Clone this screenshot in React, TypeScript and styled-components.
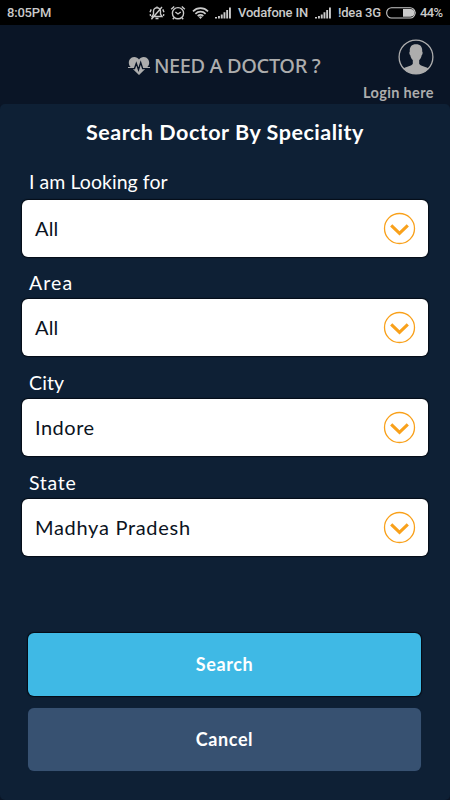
import React from "react";
import styled, { createGlobalStyle } from "styled-components";

const GlobalStyle = createGlobalStyle`
  * { box-sizing: border-box; }
  html, body { margin: 0; padding: 0; background: #0a1627; }
  button { font: inherit; border: 0; padding: 0; cursor: pointer; background: none; }
`;

const Screen = styled.main`
  width: 450px;
  height: 800px;
  overflow: hidden;
  display: flex;
  flex-direction: column;
  background: #0a1526;
  font-family: Lato, sans-serif;
  color: #fff;
`;

const StatusBar = styled.div`
  height: 25px;
  flex: none;
  display: flex;
  align-items: center;
  padding: 1px 8px 0 7px;
  background: #000;
  color: #cacaca;
  font: 500 13px/24px Roboto, sans-serif;
  white-space: nowrap;
`;

const StatusItem = styled.span<{ $width: number; $spacing?: number }>`
  width: ${(p) => p.$width}px;
  flex: none;
  letter-spacing: ${(p) => p.$spacing ?? 0}px;
  display: flex;
  align-items: center;
`;

const Header = styled.header`
  height: 79px;
  flex: none;
  display: grid;
  grid-template-columns: 128px 1fr 100px;
  color: #adadad;
`;

const Brand = styled.h1`
  grid-column: 2;
  margin: 0;
  height: 82px;
  display: flex;
  align-items: center;
  gap: 4px;
  white-space: nowrap;
  font: 500 20px/28px "Noto Sans", sans-serif;
`;

const BrandName = styled.span<{ $spacing: number }>`
  letter-spacing: ${(p) => p.$spacing}px;
`;

const Login = styled.button`
  && {
    width: 100px;
    padding: 14px 0 0 13px;
    display: flex;
    flex-direction: column;
    align-items: flex-start;
    gap: 8px;
    color: #adadad;
    font: 700 14.5px/20px Lato, sans-serif;
    letter-spacing: 0.35px;
    white-space: nowrap;
  }
  svg { margin-left: 35px; display: block; }
`;

const Panel = styled.section`
  flex: 1;
  border-radius: 5px;
  background: #0e2035;
  display: flex;
  flex-direction: column;
`;

const PanelTitle = styled.h2<{ $spacing: number }>`
  margin: 14px 0 0;
  height: 28px;
  text-align: center;
  font-size: 21.5px;
  font-weight: 700;
  line-height: 28px;
  letter-spacing: ${(p) => p.$spacing}px;
`;

const Fields = styled.div`
  margin: 24px 22px 0;
  display: flex;
  flex-direction: column;
`;

const Field = styled.div<{ $height: number; $labelTop: number }>`
  height: ${(p) => p.$height}px;
  padding-top: ${(p) => p.$labelTop}px;
  display: flex;
  flex-direction: column;
  justify-content: space-between;
`;

const Label = styled.label<{ $spacing: number }>`
  padding-left: 7px;
  font-size: 19.5px;
  line-height: 24px;
  letter-spacing: ${(p) => p.$spacing}px;
`;

const Select = styled.button<{ $spacing: number }>`
  && {
    width: 406px;
    height: 57px;
    flex: none;
    display: flex;
    align-items: center;
    justify-content: space-between;
    padding: 0 12px 0 13px;
    border-radius: 6px;
    background: #fff;
    color: #0b1322;
    box-shadow: 0 0 1px 0.5px #050d18;
    font: 400 20px/26px Lato, sans-serif;
    letter-spacing: ${(p) => p.$spacing}px;
  }
`;

const Value = styled.span`
  padding-bottom: 2px;
`;

const Actions = styled.div`
  margin: 77px 29px 0 28px;
  display: flex;
  flex-direction: column;
  gap: 12px;
`;

const Action = styled.button<{ $primary?: boolean; $spacing: number }>`
  && {
    height: 63px;
    padding-bottom: 2px;
    border-radius: 6px;
    background: ${(p) => (p.$primary ? "#3fb9e5" : "#375171")};
    box-shadow: ${(p) => (p.$primary ? "0 0 1px 0.5px #040b14" : "0 0 1px #1d3350")};
    color: #fff;
    font: 700 18px/24px Lato, sans-serif;
    letter-spacing: ${(p) => p.$spacing}px;
  }
`;

const MutedBell = () => (
  <svg width="16" height="16" viewBox="0 0 16 16" fill="none" stroke="currentColor" strokeWidth="1.4">
    <path d="M3 11.5h10L11.5 9V6.2A3.5 3.5 0 0 0 4.5 6.2V9zM6.5 13.5h3M8 2.7V1.4M2.2 4.4 1 7.2M13.8 4.4 15 7.2M1.2 9.2 1.6 11M14.8 9.2 14.4 11M2.4 14.2 13 2" />
  </svg>
);

const AlarmClock = () => (
  <svg width="16" height="16" viewBox="0 0 16 16" fill="none" stroke="currentColor" strokeWidth="1.4">
    <circle cx="8" cy="8.2" r="5.6" />
    <path d="m5.4 7 2.6 2 2.8-2M1.2 4.2l3-2.8M14.8 4.2l-3-2.8M4 12.8l-1.2 1.4M12 12.8l1.2 1.4" />
  </svg>
);

const Wifi = () => (
  <svg width="17" height="14" viewBox="0 0 17 14" fill="none" stroke="currentColor" strokeWidth="1.7">
    <path d="M1 5.3a10.6 10.6 0 0 1 15 0M3.4 7.8a7.3 7.3 0 0 1 10.2 0M5.7 10.1a4 4 0 0 1 5.6 0" />
    <path d="m8.5 13 1.8-1.9a2.6 2.6 0 0 0-3.6 0z" fill="currentColor" stroke="none" />
  </svg>
);

const Signal = () => (
  <svg width="16" height="12" viewBox="0 0 16 12" fill="currentColor">
    <path d="M0 10h2v1.5H0zM3 9h1.9v2.5H3zM5.8 7.4h1.9v4.1H5.8zM8.5 5.3h1.9v6.2H8.5zM11.2 3h1.9v8.5h-1.9zM14 .5h1.9v11H14z" />
  </svg>
);

const Battery = () => (
  <svg width="31" height="12" viewBox="0 0 31 12">
    <rect x=".7" y=".7" width="28.3" height="10.3" rx="4.8" fill="none" stroke="currentColor" strokeWidth="1.1" />
    <path d="M17 2h7.5a3.8 3.8 0 0 1 0 7.7H17zM29.4 4.2q1.2 1.6 0 3.3z" fill="currentColor" />
  </svg>
);

const HeartPulse = () => (
  <svg width="22" height="20" viewBox="0 0 22 20">
    <path d="M11 19 2.2 10.5C-.5 7.5.7 1.3 6.2 1c2.1 0 3.8 1 4.8 2.4C12 2 13.7 1 15.8 1c5.5.3 6.7 6.5 4 9.5z" fill="currentColor" />
    <path d="M2.5 12.6h4l1.8-5.3 2.2 6.4L12.7 6.5l2 6.1h4.8" fill="none" stroke="#0a1526" strokeWidth="1.4" />
    <path d="M0 11.5h5.8M15.5 11.5H22" fill="none" stroke="currentColor" strokeWidth="1" />
  </svg>
);

const Avatar = () => (
  <svg width="36" height="36" viewBox="0 0 36 36">
    <circle cx="18" cy="18" r="16.9" fill="none" stroke="currentColor" strokeWidth="1.3" />
    <path d="M18 5.2c-4.3 0-6.6 2.5-6.2 7.3-.8.5-.5 3 .5 3.8.4 2.1 1.2 3.7 2.5 4.8v3.7c-1 2.2-6.5 3-9.3 4.7A16.9 16.9 0 0 0 18 35a16.9 16.9 0 0 0 12.5-5.5c-2.8-1.7-8.3-2.5-9.3-4.7v-3.7c1.3-1.1 2.1-2.7 2.5-4.8 1-.8 1.3-3.3.5-3.8.4-4.8-1.9-7.3-6.2-7.3z" fill="currentColor" />
  </svg>
);

const ChevronCircle = () => (
  <svg width="33" height="33" viewBox="0 0 33 33" fill="none" stroke="#f9a11b">
    <circle cx="16.5" cy="16.5" r="15" strokeWidth="1.3" />
    <path d="m8.2 13.3 8.3 8 8.3-8" strokeWidth="3.1" />
  </svg>
);

const fields = [
  { id: "speciality", label: "I am Looking for", value: "All", height: 87, labelTop: 0, spacing: 0.05, valueSpacing: 0.2 },
  { id: "area", label: "Area", value: "All", height: 99, labelTop: 14, spacing: 1.1, valueSpacing: 0.2 },
  { id: "city", label: "City", value: "Indore", height: 100, labelTop: 15, spacing: 0.1, valueSpacing: 0.5 },
  { id: "state", label: "State", value: "Madhya Pradesh", height: 100, labelTop: 15, spacing: 0.7, valueSpacing: 0.7 },
];

export default function App() {
  return (
    <>
      <GlobalStyle />
      <Screen>
        <StatusBar>
          <StatusItem $width={142} $spacing={-0.2}>8:05PM</StatusItem>
          <StatusItem $width={21}><MutedBell /></StatusItem>
          <StatusItem $width={22}><AlarmClock /></StatusItem>
          <StatusItem $width={23}><Wifi /></StatusItem>
          <StatusItem $width={23}><Signal /></StatusItem>
          <StatusItem $width={77} $spacing={-0.2}>Vodafone IN</StatusItem>
          <StatusItem $width={23}><Signal /></StatusItem>
          <StatusItem $width={48} $spacing={-0.2}>!dea 3G</StatusItem>
          <StatusItem $width={34}><Battery /></StatusItem>
          <StatusItem $width={26} $spacing={-0.7}>44%</StatusItem>
        </StatusBar>
        <Header>
          <Brand>
            <HeartPulse />
            <BrandName $spacing={-0.4}>NEED A DOCTOR ?</BrandName>
          </Brand>
          <Login>
            <Avatar />
            Login here
          </Login>
        </Header>
        <Panel>
          <PanelTitle $spacing={0.53}>Search Doctor By Speciality</PanelTitle>
          <Fields>
            {fields.map((f) => (
              <Field key={f.id} $height={f.height} $labelTop={f.labelTop}>
                <Label htmlFor={f.id} $spacing={f.spacing}>{f.label}</Label>
                <Select id={f.id} $spacing={f.valueSpacing}>
                  <Value>{f.value}</Value>
                  <ChevronCircle />
                </Select>
              </Field>
            ))}
          </Fields>
          <Actions>
            <Action $primary $spacing={0.6}>Search</Action>
            <Action $spacing={0.6}>Cancel</Action>
          </Actions>
        </Panel>
      </Screen>
    </>
  );
}
